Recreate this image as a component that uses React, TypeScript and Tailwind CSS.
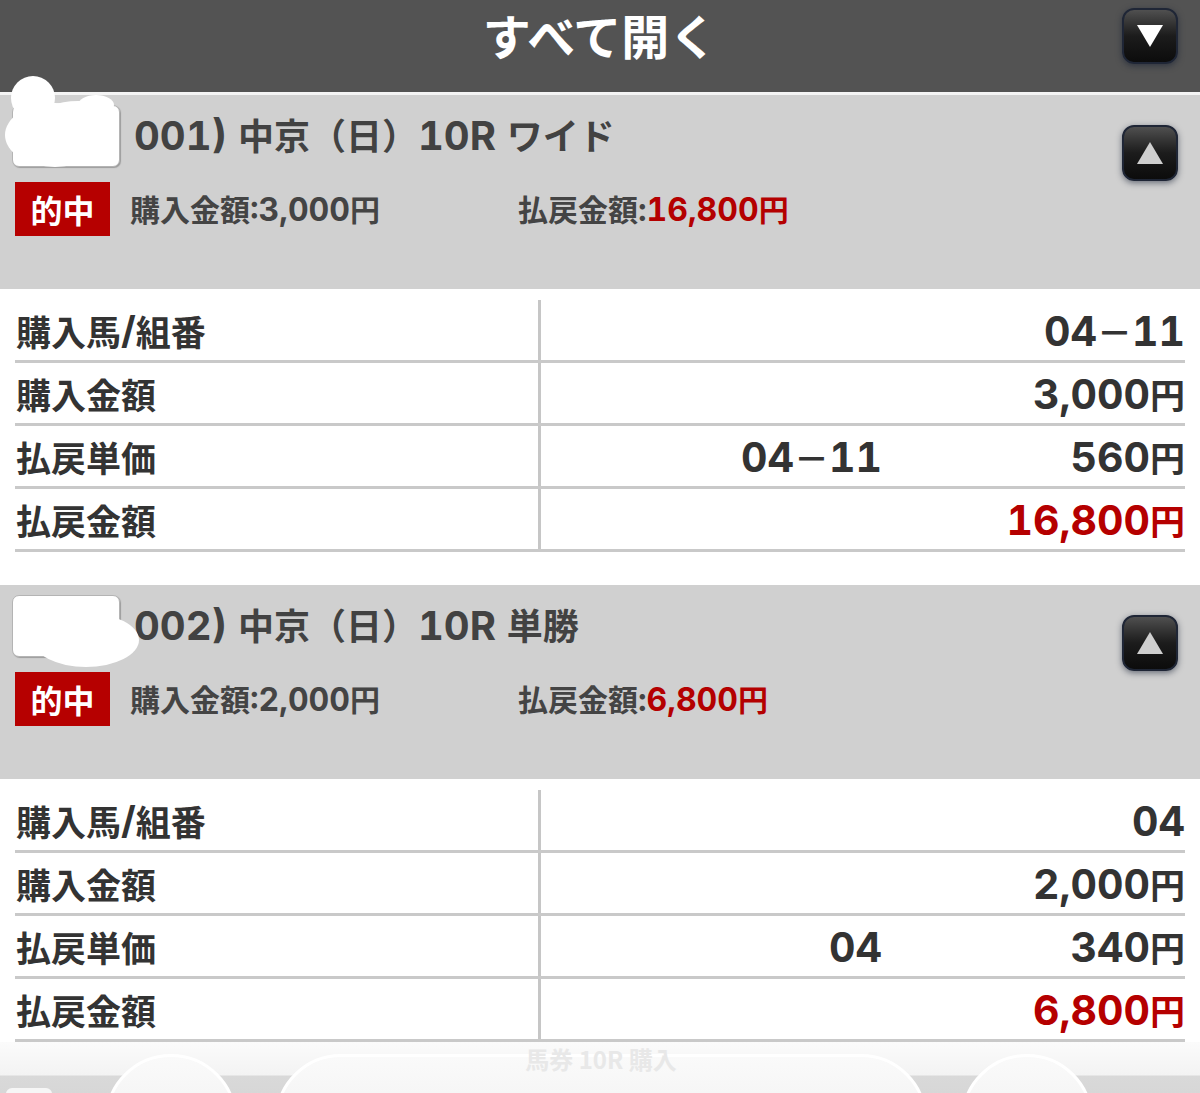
import React from "react";

const LAT = "font-['Inter','Liberation_Sans',sans-serif] tabular-nums";
const CJK = "font-['Noto_Sans_CJK_JP',sans-serif]";

// splits a string into latin runs and japanese runs so each can get its own size
function Mix({ text, lat, cjk }: { text: string; lat: string; cjk: string }) {
  const parts = text.split(/([\x20-\x7e]+)/).filter(Boolean);
  return (
    <>
      {parts.map((p, i) =>
        /^[\x20-\x7e]+$/.test(p) ? (
          <span key={i} className={`${LAT} ${lat}`}>{p}</span>
        ) : (
          <span key={i} className={`${CJK} ${cjk}`}>{p}</span>
        )
      )}
    </>
  );
}

function ArrowBtn({ up }: { up?: boolean }) {
  return (
    <div className="w-[56px] h-[56px] rounded-[12px] border-2 border-[#1f2636] bg-gradient-to-b from-[#505050] via-[#1c1c1c] to-[#0c0c0c] shadow-[0_2px_6px_rgba(20,30,50,0.55)] flex items-center justify-center">
      {up ? (
        <svg width="26" height="22" viewBox="0 0 26 22">
          <polygon points="13,0 26,22 0,22" fill="#cfcfcf" />
        </svg>
      ) : (
        <svg width="26" height="22" viewBox="0 0 26 22">
          <polygon points="0,0 26,0 13,22" fill="#ffffff" />
        </svg>
      )}
    </div>
  );
}

type Row = { label: string; mid?: string; value: string; red?: boolean };
type Ticket = { title: string; buy: string; pay: string; rows: Row[] };

const tickets: Ticket[] = [
  {
    title: "001) 中京（日）10R ワイド",
    buy: "3,000円",
    pay: "16,800円",
    rows: [
      { label: "購入馬/組番", value: "04－11" },
      { label: "購入金額", value: "3,000円" },
      { label: "払戻単価", mid: "04－11", value: "560円" },
      { label: "払戻金額", value: "16,800円", red: true },
    ],
  },
  {
    title: "002) 中京（日）10R 単勝",
    buy: "2,000円",
    pay: "6,800円",
    rows: [
      { label: "購入馬/組番", value: "04" },
      { label: "購入金額", value: "2,000円" },
      { label: "払戻単価", mid: "04", value: "340円" },
      { label: "払戻金額", value: "6,800円", red: true },
    ],
  },
];

function Scribble({ first }: { first: boolean }) {
  if (first) {
    return (
      <svg className="absolute left-0 top-[-20px]" width="140" height="95" viewBox="0 0 140 95">
        <circle cx="33" cy="23" r="22" fill="#fff" />
        <ellipse cx="55" cy="60" rx="50" ry="32" fill="#fff" />
        <ellipse cx="78" cy="42" rx="38" ry="16" fill="#fff" />
        <ellipse cx="96" cy="30" rx="18" ry="10" fill="#fff" />
      </svg>
    );
  }
  return (
    <svg className="absolute left-0 top-0" width="150" height="90" viewBox="0 0 150 90">
      <ellipse cx="86" cy="55" rx="53" ry="27" fill="#fff" />
      <ellipse cx="62" cy="34" rx="48" ry="20" fill="#fff" />
    </svg>
  );
}

function TicketBlock({ t, first }: { t: Ticket; first: boolean }) {
  return (
    <div>
      <div className="relative bg-[#d0d0d0] h-[194px] flex justify-between pl-[12px] pr-[22px]">
        <div className="flex flex-col">
          <div className="flex items-center h-[62px] mt-[10px]">
            <div className="w-[108px] h-[62px] rounded-[7px] bg-white border border-[#b4b4b4] shadow-[1px_1px_1px_rgba(0,0,0,0.25)]" />
            <div className="ml-[14px] font-bold text-[#424242] leading-none flex items-baseline whitespace-pre">
              <Mix text={t.title} lat="text-[40px]" cjk="text-[36px]" />
            </div>
          </div>
          <div className="flex items-center mt-[15px] ml-[3px]">
            <div className={`${CJK} w-[95px] h-[54px] bg-[#b60000] text-white text-[32px] font-bold flex items-center justify-center leading-none`}>
              的中
            </div>
            <div className="w-[408px] pl-[20px] font-bold text-[#444] leading-none flex items-baseline">
              <Mix text={`購入金額:${t.buy}`} lat="text-[32px]" cjk="text-[30px]" />
            </div>
            <div className="font-bold text-[#444] leading-none flex items-baseline">
              <Mix text="払戻金額:" lat="text-[32px]" cjk="text-[30px]" />
              <span className="text-[#b40000] flex items-baseline">
                <Mix text={t.pay} lat="text-[32px]" cjk="text-[30px]" />
              </span>
            </div>
          </div>
        </div>
        <div className="mt-[30px]">
          <ArrowBtn up />
        </div>
        <Scribble first={first} />
      </div>

      <div className="bg-white px-[15px] pt-[11px]">
        {t.rows.map((r) => (
          <div key={r.label} className="flex h-[63px] border-b-[3px] border-[#c9c9c9]">
            <div className="w-[523px] flex items-center pl-[1px] font-bold text-[#333] leading-none">
              <Mix text={r.label} lat="text-[38px]" cjk="text-[35px]" />
            </div>
            <div className="w-[3px] bg-[#c6c6c6]" />
            <div className="w-[341px] flex items-baseline justify-end self-center pt-[3px] font-bold text-[#333] leading-none">
              {r.mid && <Mix text={r.mid} lat="text-[41px]" cjk="text-[35px]" />}
            </div>
            <div
              className={`flex-1 flex items-baseline justify-end self-center pt-[3px] font-bold leading-none ${
                r.red ? "text-[#b50000]" : "text-[#333]"
              }`}
            >
              <Mix text={r.value} lat="text-[41px]" cjk="text-[35px]" />
            </div>
          </div>
        ))}
      </div>
    </div>
  );
}

export default function App() {
  return (
    <div className="w-[1200px] h-[1093px] overflow-hidden bg-white">
      <div className="h-[95px] bg-[#535353] border-b-[3px] border-[#f4f4f4] flex items-start">
        <div className="w-[100px]" />
        <div className="flex-1 flex justify-center pt-[4px]">
          <span className={`${CJK} text-[48px] font-bold text-white leading-[60px] whitespace-nowrap`}>すべて開く</span>
        </div>
        <div className="w-[100px] flex justify-end pr-[22px] pt-[8px]">
          <ArrowBtn />
        </div>
      </div>

      <TicketBlock t={tickets[0]} first={true} />
      <div className="h-[33px] bg-white" />
      <TicketBlock t={tickets[1]} first={false} />

      {/* faded tab bar peeking in at the bottom */}
      <div className="relative h-[60px] overflow-hidden bg-[linear-gradient(to_bottom,#fbfbfb_0px,#f3f3f3_33px,#d9d9d9_34px,#d6d6d6_100%)]">
        <div className="flex pt-[12px]">
          <div className="ml-[6px] mt-[34px] w-[46px] h-[40px] rounded-[6px] bg-[#f6f6f6]" />
          <div className="ml-[53px] w-[132px] h-[132px] rounded-full border-[3px] border-white bg-gradient-to-b from-[#fafafa] to-[#ececec]" />
          <div className="ml-[38px] w-[652px] h-[132px] rounded-[66px] border-[3px] border-white bg-gradient-to-b from-[#fafafa] to-[#ececec] flex justify-center">
            <span className={`${CJK} -mt-[10px] text-[24px] font-bold text-[#e8e8e8] leading-none`}>馬券 10R 購入</span>
          </div>
          <div className="ml-[34px] w-[132px] h-[132px] rounded-full border-[3px] border-white bg-gradient-to-b from-[#fafafa] to-[#ececec]" />
        </div>
      </div>
    </div>
  );
}
